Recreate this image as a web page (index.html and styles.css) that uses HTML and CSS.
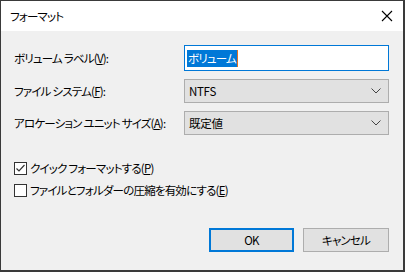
FILE: index.html
```html
<!DOCTYPE html>
<html lang="ja">
<head>
<meta charset="utf-8">
<link rel="stylesheet" href="styles.css">
</head>
<body>
<div class="win">
  <div class="titlebar">
    <span class="title">フォーマット</span>
    <svg class="close" width="12" height="12" viewBox="0 0 12 12"><path d="M1 1 L11 11 M11 1 L1 11" stroke="#000" stroke-width="1.1" fill="none"/></svg>
  </div>
  <div class="content">
    <div class="form">
      <div class="label">ボリューム ラベル(<u>V</u>):</div>
      <div class="textbox"><span class="sel">ボリューム</span><span class="caret"></span></div>
      <div class="label">ファイル システム(<u>F</u>):</div>
      <div class="combo"><span>NTFS</span><svg width="10" height="6" viewBox="0 0 10 6"><path d="M0.5 0.5 L5 5 L9.5 0.5" stroke="#444" fill="none"/></svg></div>
      <div class="label">アロケーション ユニット サイズ(<u>A</u>):</div>
      <div class="combo"><span>既定値</span><svg width="10" height="6" viewBox="0 0 10 6"><path d="M0.5 0.5 L5 5 L9.5 0.5" stroke="#444" fill="none"/></svg></div>
    </div>
    <div class="checks">
      <div class="check"><span class="box"><svg width="11" height="11" viewBox="0 0 11 11"><path d="M1.5 5.5 L4 8 L9.5 2" stroke="#333" stroke-width="1.2" fill="none"/></svg></span>クイック フォーマットする(<u>P</u>)</div>
      <div class="check"><span class="box"></span>ファイルとフォルダーの圧縮を有効にする(<u>E</u>)</div>
    </div>
    <div class="buttons">
      <div class="btn default">OK</div>
      <div class="btn">キャンセル</div>
    </div>
  </div>
</div>
</body>
</html>
```
FILE: styles.css
```css
html, body {
  margin: 0;
  padding: 0;
  background: #f0f0f0;
}
body {
  font-family: "Noto Sans CJK JP", "Noto Sans", sans-serif;
  font-size: 11.5px;
  letter-spacing: -0.8px;
  font-feature-settings: "palt";
  color: #000;
  white-space: nowrap;
}
.win {
  box-sizing: border-box;
  width: 405px;
  height: 272px;
  border: 1px solid #3a3a3a;
  border-right-width: 2px;
  border-bottom-width: 2px;
  display: flex;
  flex-direction: column;
  background: #f0f0f0;
}
.titlebar {
  height: 30px;
  background: #fff;
  display: flex;
  align-items: center;
  justify-content: space-between;
  padding: 0 10px 0 9px;
  flex: none;
}
.title {
  line-height: 16px;
}
.content {
  flex: 1;
  display: flex;
  flex-direction: column;
  padding: 14px 14px 0 13px;
}
.form {
  display: grid;
  grid-template-columns: 170px 205px;
  row-gap: 8px;
  align-items: center;
}
.label {
  line-height: 16px;
}
.textbox {
  box-sizing: border-box;
  height: 26px;
  border: 1px solid #0078d7;
  background: #fff;
  display: flex;
  align-items: center;
  padding-left: 2px;
}
.sel {
  background: #0078d7;
  color: #fff;
  line-height: 17px;
  padding: 0 1px;
}
.caret {
  width: 1px;
  height: 17px;
  background: #e07020;
}
.combo {
  box-sizing: border-box;
  height: 24px;
  border: 1px solid #adadad;
  background: #e1e1e1;
  display: flex;
  align-items: center;
  justify-content: space-between;
  padding: 0 7px 0 4px;
  line-height: 16px;
}
.combo span { letter-spacing: -0.3px; }
.checks {
  margin-top: 25px;
  display: flex;
  flex-direction: column;
  gap: 6px;
}
.check {
  display: flex;
  align-items: center;
  line-height: 16px;
  height: 16px;
}
.box {
  box-sizing: border-box;
  width: 13px;
  height: 13px;
  border: 1px solid #333;
  background: #fff;
  margin-right: 3px;
  display: flex;
  align-items: center;
  justify-content: center;
}
.box svg { display: block; }
.buttons {
  margin-top: 30px;
  display: flex;
  justify-content: flex-end;
  gap: 9px;
}
.btn {
  box-sizing: border-box;
  width: 86px;
  height: 24px;
  border: 1px solid #adadad;
  background: #e1e1e1;
  display: flex;
  align-items: center;
  justify-content: center;
  line-height: 16px;
}
.btn.default {
  border: 2px solid #0078d7;
  width: 85px;
}
u { text-decoration: underline; text-underline-offset: 1px; }
```
